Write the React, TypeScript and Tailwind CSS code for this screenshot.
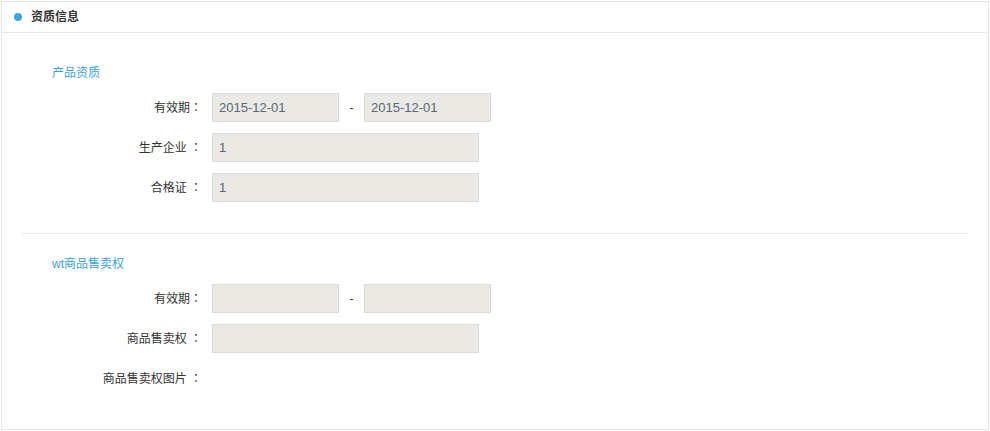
import React from 'react';

const font = { fontFamily: '"Liberation Sans", "Noto Sans CJK SC", sans-serif' };

const Field: React.FC<{ value?: string; wide?: boolean }> = ({ value, wide }) => (
  <div
    className={`${wide ? 'w-[267px]' : 'w-[127px]'} h-[29px] bg-[#eae9e3] border border-[#dcdcdc] px-[6px] flex items-center text-[13px] text-[#56687a]`}
  >
    {value}
  </div>
);

const Row: React.FC<{ label: string; gap?: boolean; className?: string; children?: React.ReactNode }> = ({
  label,
  gap,
  className,
  children,
}) => (
  <div className={`flex items-center h-[29px] ${className ?? ''}`}>
    <div className="w-[150px] text-right text-[12px] text-[#333] whitespace-pre">
      {label}
      {gap ? ' ' : ''}
      <span className="inline-block w-[12px] text-center" style={{ fontFamily: '"Noto Sans CJK TC", sans-serif' }}>
        ：
      </span>
    </div>
    <div className="ml-[10px] flex items-center">{children}</div>
  </div>
);

const Range: React.FC<{ from?: string; to?: string }> = ({ from, to }) => (
  <>
    <Field value={from} />
    <span className="w-[25px] text-center text-[12px] text-[#333]">-</span>
    <Field value={to} />
  </>
);

export default function App() {
  return (
    <div className="w-[990px] h-[431px] bg-white p-px" style={font}>
      <div className="h-full border border-[#e6e6e6] flex flex-col">
        <div className="h-[31px] border-b border-[#e8e8e8] flex items-center pl-[12px]">
          <span className="w-[8px] h-[8px] rounded-full bg-[#3ba5e3]" />
          <span className="ml-[9px] text-[12px] font-bold text-[#333]">资质信息</span>
        </div>

        <div className="pl-5 pr-[19px]">
          <div className="pl-[30px] pt-[32px] pb-[31px]">
            <div className="h-4 leading-4 text-[12px] text-[#3ba2e0]">产品资质</div>
            <Row label="有效期" className="mt-3">
              <Range from="2015-12-01" to="2015-12-01" />
            </Row>
            <Row label="生产企业" gap className="mt-[11px]">
              <Field value="1" wide />
            </Row>
            <Row label="合格证" gap className="mt-[11px]">
              <Field value="1" wide />
            </Row>
          </div>

          <div className="h-px bg-[#e8e8e8]" />

          <div className="pl-[30px] pt-[22px]">
            <div className="h-4 leading-4 text-[12px] text-[#3ba2e0]">wt商品售卖权</div>
            <Row label="有效期" className="mt-[12px]">
              <Range />
            </Row>
            <Row label="商品售卖权" gap className="mt-[11px]">
              <Field wide />
            </Row>
            <Row label="商品售卖权图片" gap className="mt-[11px]" />
          </div>
        </div>
      </div>
    </div>
  );
}
